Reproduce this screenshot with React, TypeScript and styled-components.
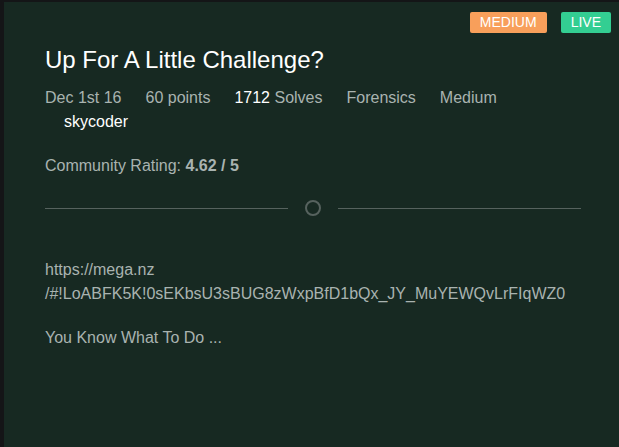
import React from "react";
import styled, { createGlobalStyle } from "styled-components";

const GlobalStyle = createGlobalStyle`
  html, body {
    margin: 0;
    padding: 0;
    background: #141517;
    font-family: "Liberation Sans", Arial, sans-serif;
  }
`;

const Page = styled.div`
  padding: 2px 0 0 4px;
  height: 445px;
  overflow: hidden;
`;

const CardBox = styled.div`
  background: #172922;
  height: 460px;
  padding: 10px 8px 0 41px;
`;

const BadgeRow = styled.div`
  display: flex;
  justify-content: flex-end;
  gap: 14px;
`;

const Badge = styled.span<{ $bg: string }>`
  background: ${(p) => p.$bg};
  color: #fff;
  font-size: 14px;
  line-height: 21px;
  padding: 0 10px;
  border-radius: 2px;
`;

const Title = styled.h1`
  margin: 13px 0 0;
  color: #fff;
  font-size: 24px;
  font-weight: normal;
  line-height: 28px;
`;

const Meta = styled.div`
  display: flex;
  flex-wrap: wrap;
  column-gap: 24px;
  margin-top: 12px;
  width: 470px;
  font-size: 16px;
  line-height: 24px;
  color: #a9b3b0;
`;

const Strong = styled.span`
  color: #fff;
`;

const Author = styled.span`
  padding-left: 19px;
  color: #fff;
`;

const Rating = styled.div`
  margin-top: 20px;
  font-size: 16px;
  line-height: 24px;
  color: #a9b3b0;
  b {
    font-weight: bold;
  }
`;

const Divider = styled.div`
  display: flex;
  align-items: center;
  gap: 17px;
  margin: 22px 30px 0 0;
  width: 536px;
`;

const Rule = styled.div`
  flex: 1;
  height: 1px;
  background: #56625e;
`;

const Ring = styled.div`
  width: 12px;
  height: 12px;
  border: 2px solid #56625e;
  border-radius: 50%;
`;

const Body = styled.div`
  margin-top: 42px;
  font-size: 16px;
  line-height: 24px;
  color: #a9b3b0;
  p {
    margin: 0 0 20px;
  }
`;

export default function App() {
  return (
    <Page>
      <GlobalStyle />
      <CardBox>
        <BadgeRow>
          <Badge $bg="#f89f5b">MEDIUM</Badge>
          <Badge $bg="#33ce92">LIVE</Badge>
        </BadgeRow>
        <Title>Up For A Little Challenge?</Title>
        <Meta>
          <span>Dec 1st 16</span>
          <span>60 points</span>
          <span>
            <Strong>1712</Strong> Solves
          </span>
          <span>Forensics</span>
          <span>Medium</span>
          <Author>skycoder</Author>
        </Meta>
        <Rating>
          Community Rating: <b>4.62 / 5</b>
        </Rating>
        <Divider>
          <Rule />
          <Ring />
          <Rule />
        </Divider>
        <Body>
          <p>
            https://mega.nz
            <br />
            /#!LoABFK5K!0sEKbsU3sBUG8zWxpBfD1bQx_JY_MuYEWQvLrFIqWZ0
          </p>
          <p>You Know What To Do ...</p>
        </Body>
      </CardBox>
    </Page>
  );
}
